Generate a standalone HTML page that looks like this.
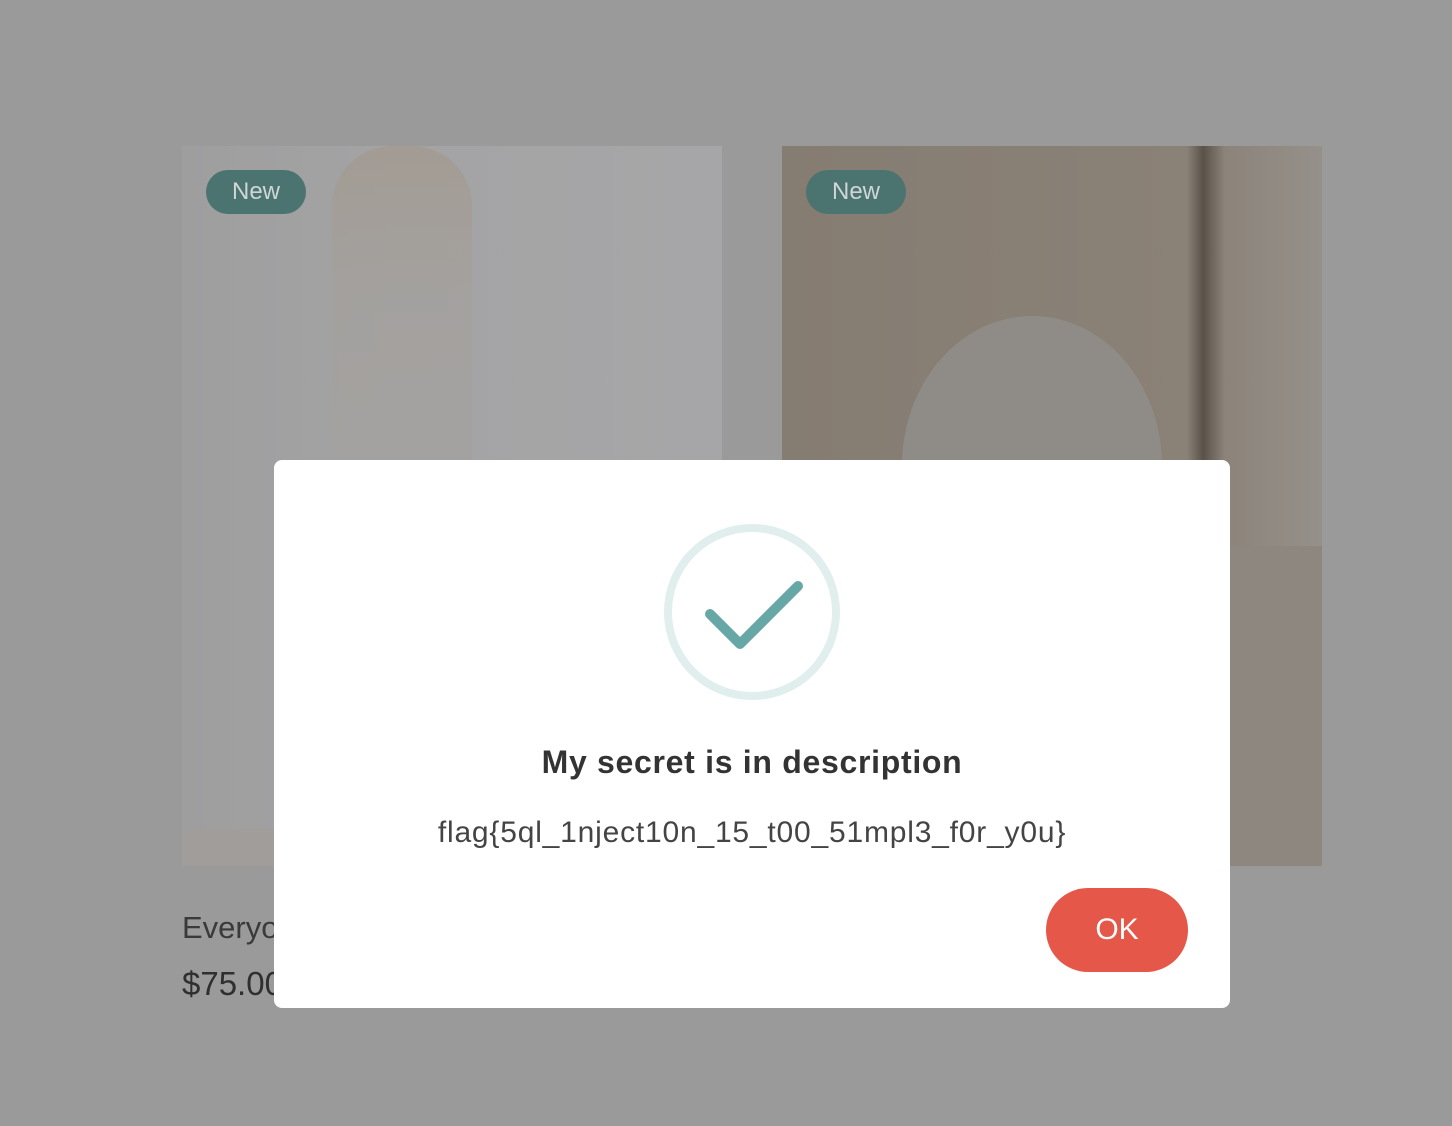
<!DOCTYPE html>
<html><head><meta charset="utf-8"><style>
body{margin:0;width:1452px;height:1126px;background:#9a9a9a;position:relative;overflow:hidden;font-family:"Liberation Sans",sans-serif}
.card{position:absolute;top:146px;width:540px;height:720px}
.badge{position:absolute;left:24px;top:24px;width:100px;height:44px;border-radius:22px;background:#4b7471;color:#cfd6d5;font-size:24px;line-height:44px;text-align:center}
.modal{position:absolute;left:274px;top:460px;width:956px;height:548px;background:#fff;border-radius:8px}
.t{position:absolute;left:0;width:956px;text-align:center;color:#333}
.ok{position:absolute;left:772px;top:428px;width:142px;height:84px;border-radius:42px;background:#e55748;color:#fff;font-size:30px;line-height:84px;text-align:center}
</style></head><body>
<div class="card" style="left:182px;background:linear-gradient(90deg,#9e9e9f 0%,#a4a4a5 40%,#a6a6a8 100%)">
 <div style="position:absolute;left:150px;top:0;width:140px;height:720px;background:linear-gradient(#a39a90,#a3a09d 20%,#a5a3a0 60%,#8f96a6 80%,#9e9e9f 100%);border-radius:60px 60px 0 0;opacity:.8"></div>
 <div style="position:absolute;left:0;top:683px;width:540px;height:37px;background:#a09d9a"></div>
 <div class="badge">New</div>
</div>
<div class="card" style="left:782px;background:linear-gradient(90deg,#857c72 0%,#8a8177 75%,#5a5249 78%,#8c847b 82%,#95908a 100%)">
 <div style="position:absolute;left:120px;top:170px;width:260px;height:300px;border-radius:50%;background:#8f8c88"></div>
 <div style="position:absolute;left:440px;top:400px;width:100px;height:320px;background:#8e877f"></div>
 <div class="badge">New</div>
</div>
<div style="position:absolute;left:182px;top:910px;font-size:31px;color:#3a3a3a">Everyo</div>
<div style="position:absolute;left:182px;top:965px;font-size:33px;color:#2f2f2f">$75.00</div>
<div class="modal">
 <svg style="position:absolute;left:388px;top:62px" width="180" height="180" viewBox="0 0 180 180">
  <circle cx="90" cy="90" r="84" fill="none" stroke="#e1eeee" stroke-width="8"/>
  <path d="M48 92 L78 122 L136 64" fill="none" stroke="#67a8a6" stroke-width="10" stroke-linecap="round" stroke-linejoin="round"/>
 </svg>
 <div class="t" style="top:284px;font-size:32px;font-weight:bold;color:#333;letter-spacing:0.7px">My secret is in description</div>
 <div class="t" style="top:356px;font-size:30px;color:#444;letter-spacing:0.8px">flag{5ql_1nject10n_15_t00_51mpl3_f0r_y0u}</div>
 <div class="ok">OK</div>
</div>
</body></html>
